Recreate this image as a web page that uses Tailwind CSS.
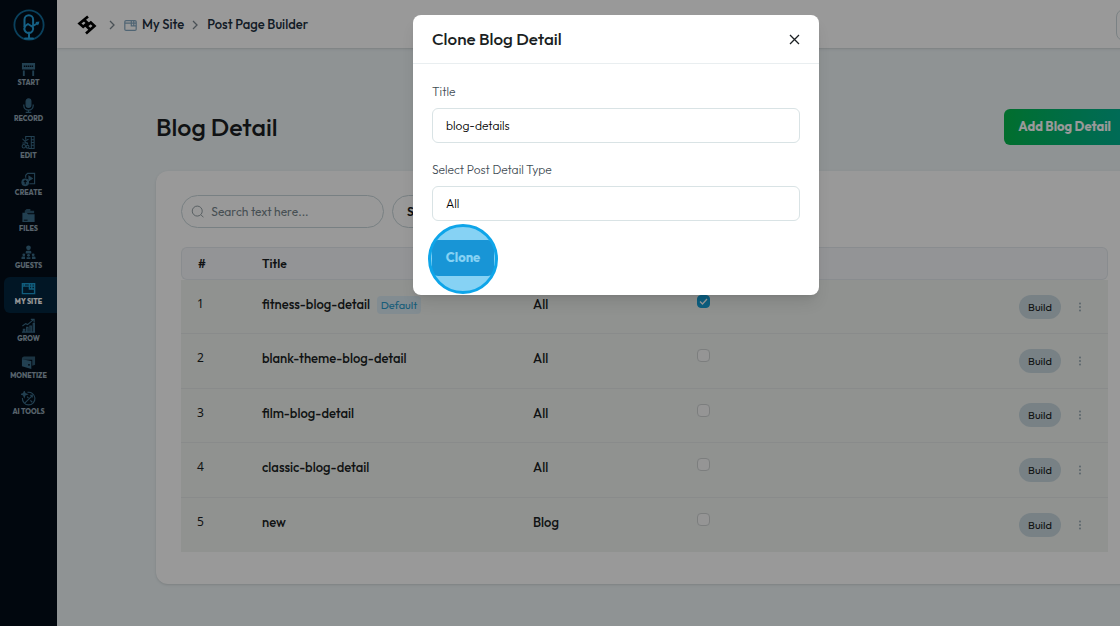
<!DOCTYPE html>
<html lang="en">
<head>
  <meta charset="UTF-8">
  <meta name="viewport" content="width=device-width, initial-scale=1">
  <title>Post Page Builder</title>
  <script src="https://cdn.jsdelivr.net/npm/@tailwindcss/browser@4"></script>
</head>
<body class="overflow-hidden font-['Outfit','Lato',sans-serif] text-[#1b1f23]">
  <div class="relative flex w-[110%] min-h-screen bg-[#eef5f7]">

    <!-- Sidebar -->
    <aside class="w-[57px] shrink-0 bg-[#020d18] pl-1">
      <a href="#" aria-label="Home" class="flex h-[57px] items-center justify-center pr-1 pb-2">
        <svg class="size-8" viewBox="0 0 32 32" fill="none" stroke-linecap="round" stroke-linejoin="round">
          <circle cx="16" cy="16" r="14.6" stroke="#126c9a" stroke-width="1.800"/>
          <g stroke="#24a0dc" stroke-width="2">
            <path d="M11.500 17V10.500a4.300 4.300 0 0 1 8.600 0V16"/>
            <path d="M11.500 17.500l3.500-2.500 4 2.500 6-3.500"/>
            <path d="M12 17.500a4.400 4.400 0 1 0 7.800.5M16 23.500V29M12 29.500h8"/>
          </g>
          <path d="M22.500 13l4-.5-1.500 4z" fill="#24a0dc"/>
        </svg>
      </a>
      <nav class="grid h-[366px] grid-rows-10 text-center text-[7px] font-extrabold leading-[8px] text-[#93a6b4]">
        <a href="#" class="flex flex-col items-center justify-center gap-0.5 pr-1 pb-0.5">
          <svg class="size-[15px] text-[#3a6b88]" viewBox="0 0 16 16" fill="currentColor"><path d="M1 1h14v7H1zM2 9h2v6H2zM12 9h2v6h-2z"/><path d="M3 4.500h10" stroke="#020d18" stroke-width="1.500" stroke-dasharray="1.500 .6"/></svg>
          START
        </a>
        <a href="#" class="flex flex-col items-center justify-center gap-0.5 pr-1 pb-0.5">
          <svg class="size-[15px] text-[#3a6b88]" viewBox="0 0 16 16" fill="none" stroke="currentColor" stroke-width="1.300"><rect x="5.500" y="1" width="5" height="9" rx="2.500" fill="currentColor"/><path d="M3 7v1a5 5 0 0 0 10 0V7M8 13v2M5 15.300h6"/></svg>
          RECORD
        </a>
        <a href="#" class="flex flex-col items-center justify-center gap-0.5 pr-1 pb-0.5">
          <svg class="size-[15px] text-[#3a6b88]" viewBox="0 0 16 16" fill="none" stroke="currentColor" stroke-width="1.100"><path d="M5 5V1.500h9v13H8M11 1.500v13M11 5h3M11 8h3M11 11h3M1.500 4l6 6M1.500 8.500h6M4 6.500l4-2"/><circle cx="3" cy="12" r="1.800"/><circle cx="7" cy="12.500" r="1.500"/></svg>
          EDIT
        </a>
        <a href="#" class="flex flex-col items-center justify-center gap-0.5 pr-1 pb-0.5">
          <svg class="size-[15px] text-[#3a6b88]" viewBox="0 0 16 16" fill="none" stroke="currentColor" stroke-width="1.200"><path d="M5 6V3.500L7 1.500h7.500v11H9"/><path d="M8.500 4.500v4.500l3.500-2.200z" fill="currentColor"/><circle cx="4.500" cy="11" r="3.500" fill="currentColor"/><path d="M4.500 9v4M3 10.500l1.500-1.500L6 10.500" stroke="#020d18"/></svg>
          CREATE
        </a>
        <a href="#" class="flex flex-col items-center justify-center gap-0.5 pr-1 pb-0.5">
          <svg class="size-[15px] text-[#3a6b88]" viewBox="0 0 16 16" fill="currentColor"><path d="M4 5.500V3l2-2h4v2h4v2.500z" opacity=".8"/><path d="M1.500 5H6l1.500 1.700h7V15h-13z"/><path d="M3 13h4" stroke="#020d18"/></svg>
          FILES
        </a>
        <a href="#" class="flex flex-col items-center justify-center gap-0.5 pr-1 pb-0.5">
          <svg class="size-[15px] text-[#3a6b88]" viewBox="0 0 16 16" fill="currentColor"><circle cx="8" cy="3" r="2.500"/><path d="M5 9V7.500Q5 6 6.500 6h3Q11 6 11 7.500V9z"/><circle cx="3" cy="10.500" r="1.500"/><circle cx="13" cy="10.500" r="1.500"/><circle cx="8" cy="11" r="1.500"/><path d="M.5 15v-1.500q0-1.200 1.200-1.200h2.600v2.700zM15.500 15v-1.500q0-1.200-1.200-1.200h-2.600v2.700zM6 15v-2h4v2z"/></svg>
          GUESTS
        </a>
        <a href="#" class="flex flex-col items-center justify-center gap-0.5 rounded-l-md bg-[#03253e] pr-1 pb-0.5 text-white">
          <svg class="size-[15px] text-[#1c9cd0]" viewBox="0 0 16 16" fill="none" stroke="currentColor" stroke-width="1.500"><path d="M1.500 3h13v10.500h-13zM1.500 5.500h7M3.500 3v2"/><path d="M9 3v5.500h5.500M9 5.500h5.500M11.500 3v5.500"/></svg>
          MY SITE
        </a>
        <a href="#" class="flex flex-col items-center justify-center gap-0.5 pr-1 pb-0.5">
          <svg class="size-[15px] text-[#3a6b88]" viewBox="0 0 16 16" fill="none" stroke="currentColor" stroke-width="1.200"><path d="M1 15h14M2.500 15v-3h1.500v3M6 15v-5h1.500v5M9.500 15V8.500H11V15M13 15V6h1.300v9M1.500 8.500L5 6l2 1 6-5M10.500 1.500H14V5"/></svg>
          GROW
        </a>
        <a href="#" class="flex flex-col items-center justify-center gap-0.5 pr-1 pb-0.5">
          <svg class="size-[15px] text-[#3a6b88]" viewBox="0 0 16 16" fill="currentColor"><path d="M1 3l2-1.500h12v9l-3 1V5H1z" opacity=".8"/><path d="M1 4.500l10 2V15L1 12z"/><circle cx="8.500" cy="10.500" r="1" fill="#020d18"/></svg>
          MONETIZE
        </a>
        <a href="#" class="flex flex-col items-center justify-center gap-0.5 pr-1 pb-0.5">
          <svg class="size-[15px] text-[#3a6b88]" viewBox="0 0 16 16" fill="none" stroke="currentColor" stroke-width="1.200"><path d="M7 1.500a6.700 6.700 0 1 1-5.500 6M4 13L12 5M9.500 4.500H12V7M10 10l2 2"/><path d="M3.500.5l.8 2.200 2.200.8-2.200.8-.8 2.200-.8-2.200L.5 3.500l2.200-.8zM6.500 6l1.500 1.500" fill="currentColor"/></svg>
          AI TOOLS
        </a>
      </nav>
    </aside>

    <div class="min-w-0 flex-1">
      <!-- Top bar -->
      <header class="flex h-12 items-center justify-between bg-white px-5 pt-0.5 shadow">
        <nav class="flex items-center text-[13px] font-medium text-[#1d2f40]" aria-label="Breadcrumb">
          <a href="#" aria-label="Dashboard">
            <svg class="size-5 text-black" viewBox="0 0 20 20" fill="none" stroke="currentColor" stroke-width="2.700"><path d="M11 1.500L2.500 8.500l3.700 3.300L10.500 8 7 4.800"/><path d="M9 18.500l8.500-7.500-3.700-3.500L9.500 11l3.500 3.500"/></svg>
          </a>
          <svg class="ml-3 h-2.5 w-1.5 text-[#7c8790]" viewBox="0 0 6 10" fill="none" stroke="currentColor" stroke-width="1.300"><path d="M1 1l4 4-4 4"/></svg>
          <svg class="ml-[9px] size-[13px] text-[#86a9c2]" viewBox="0 0 16 16" fill="none" stroke="currentColor" stroke-width="1.500"><rect x="1" y="2" width="14" height="12" rx="1.500"/><path d="M1 5h8M9 2v6.500h6M9 5h6M12 2v6"/></svg>
          <a href="#" class="ml-[5px]">My Site</a>
          <svg class="ml-2 h-2.5 w-1.5 text-[#7c8790]" viewBox="0 0 6 10" fill="none" stroke="currentColor" stroke-width="1.300"><path d="M1 1l4 4-4 4"/></svg>
          <a href="#" class="ml-[9px]">Post Page Builder</a>
        </nav>
        <button type="button" aria-label="Account" class="h-8 w-24 rounded-lg border border-[#ccd8dc] bg-white"></button>
      </header>

      <main class="px-[99px] pt-[61px]">
        <div class="flex items-center justify-between pr-2">
          <h1 class="text-[25px] leading-9 font-medium">Blog Detail</h1>
          <button type="button" class="h-9 rounded-md bg-linear-to-r from-[#05b84c] to-[#00b292] px-3.5 text-[13px] font-bold text-white">Add Blog Detail</button>
        </div>

        <section class="mt-[26px] rounded-xl bg-white px-[25px] pt-6 pb-8 shadow">
          <div class="flex gap-2">
            <label class="flex h-[33px] w-[203px] items-center gap-[7px] rounded-full border border-[#c9d6da] px-[9px]">
              <svg class="size-[15px] text-[#8b979d]" viewBox="0 0 16 16" fill="none" stroke="currentColor" stroke-width="1.100"><circle cx="7.500" cy="7.500" r="6"/><path d="M12 12l3 3"/></svg>
              <input type="text" aria-label="Search" placeholder="Search text here..." class="w-full text-xs outline-none placeholder:text-[#77858c]">
            </label>
            <button type="button" class="h-[33px] w-28 rounded-full border border-[#c9d6da] px-3.5 text-left text-xs font-semibold">Select</button>
          </div>

          <table class="mt-[19px] h-[305px] w-full table-fixed border-separate border-spacing-0 text-left">
            <colgroup>
              <col class="w-[65px]">
              <col class="w-[271px]">
              <col class="w-[164px]">
              <col>
              <col class="w-[105px]">
            </colgroup>
            <thead>
              <tr class="h-[33px] text-xs [&>th]:border-y [&>th]:border-[#e5eaee] [&>th]:bg-[#f6f7fb] [&>th]:px-4 [&>th]:font-semibold">
                <th class="rounded-l-md border-l">#</th>
                <th>Title</th>
                <th></th>
                <th></th>
                <th class="rounded-r-md border-r"></th>
              </tr>
            </thead>
            <tbody id="posts" class="bg-[#f0f3f1] text-[13px] leading-[18px] font-medium"></tbody>
          </table>
        </section>
      </main>
    </div>

    <!-- Clone dialog -->
    <div class="absolute inset-0 flex items-start justify-center bg-black/40 pt-[15px]">
      <div role="dialog" aria-labelledby="cloneTitle" class="w-[406px] rounded-lg bg-white shadow-lg">
        <div class="flex h-[49px] items-center justify-between border-b border-[#e9eef0] px-[19px]">
          <h2 id="cloneTitle" class="text-[17px] font-medium">Clone Blog Detail</h2>
          <button type="button" aria-label="Close" class="flex size-3 items-center justify-center">
            <svg class="size-[11px]" viewBox="0 0 11 11" fill="none" stroke="currentColor" stroke-width="1.300"><path d="M1 1l9 9M10 1l-9 9"/></svg>
          </button>
        </div>
        <form class="px-[19px] pt-[19px] pb-[19px] text-xs font-light">
          <label for="title" class="block leading-[18px] text-[#3f4c54]">Title</label>
          <input id="title" type="text" value="blog-details" class="mt-[7px] h-[35px] w-full rounded-md border border-[#d9e3e5] px-[13px] text-black">
          <label for="type" class="mt-[18px] block leading-[18px] text-[#3f4c54]">Select Post Detail Type</label>
          <select id="type" class="mt-[7px] h-[35px] w-full appearance-none rounded-md border border-[#d9e3e5] px-[13px] text-black">
            <option>All</option>
            <option>Blog</option>
          </select>
          <div class="relative mt-[19px] w-[62px]">
            <button type="button" class="block h-9 w-full rounded-md bg-[#2285c3] text-[13px] font-bold text-white">Clone</button>
            <span class="pointer-events-none absolute -top-4 -left-1 size-[70px] rounded-full border-3 border-[#0ea5e9] bg-[#0ea5e9]/50"></span>
          </div>
        </form>
      </div>
    </div>
  </div>

  <script>
    const posts = [
      { title: 'fitness-blog-detail', type: 'All', isDefault: true },
      { title: 'blank-theme-blog-detail', type: 'All' },
      { title: 'film-blog-detail', type: 'All' },
      { title: 'classic-blog-detail', type: 'All' },
      { title: 'new', type: 'Blog' },
    ];

    document.getElementById('posts').innerHTML = posts
      .map((post, i) => `
        <tr class="h-[54px] align-top [&>td]:px-4 [&>td:not(:last-child)]:pt-[15px] [&:not(:last-child)>td]:border-b [&>td]:border-[#e4e8e8]">
          <td class="font-['Noto_Sans'] text-xs leading-[18px] font-normal">${i + 1}</td>
          <td>
            ${post.title}
            ${post.isDefault ? '<span class="ml-1 rounded-sm bg-[#d9e9f2] px-1 py-0.5 text-[11px] font-normal text-[#2a9ccc]">Default</span>' : ''}
          </td>
          <td>${post.type}</td>
          <td>
            <span class="relative block size-[13px]">
              <input type="checkbox" aria-label="Default for ${post.title}" ${post.isDefault ? 'checked' : ''}
                     class="peer block size-[13px] appearance-none rounded-sm border border-[#cfd3d3] bg-[#f8f9f9] checked:border-[#149ed6] checked:bg-[#149ed6]">
              <svg class="pointer-events-none absolute inset-0 hidden size-[13px] text-white peer-checked:block" viewBox="0 0 13 13" fill="none" stroke="currentColor" stroke-width="1.300"><path d="M3 6.500L5.500 9 10 4"/></svg>
            </span>
          </td>
          <td class="align-middle">
            <div class="flex items-center gap-[17px]">
              <button type="button" class="h-6 w-[42px] shrink-0 rounded-full bg-[#c8d8de] text-[11px] font-normal">Build</button>
              <button type="button" aria-label="More" class="text-[#8ea3ae]">
                <svg class="h-2.5 w-1" viewBox="0 0 4 10" fill="currentColor"><circle cx="2" cy="1.500" r=".9"/><circle cx="2" cy="5" r=".9"/><circle cx="2" cy="8.500" r=".9"/></svg>
              </button>
            </div>
          </td>
        </tr>`)
      .join('');
  </script>
</body>
</html>
